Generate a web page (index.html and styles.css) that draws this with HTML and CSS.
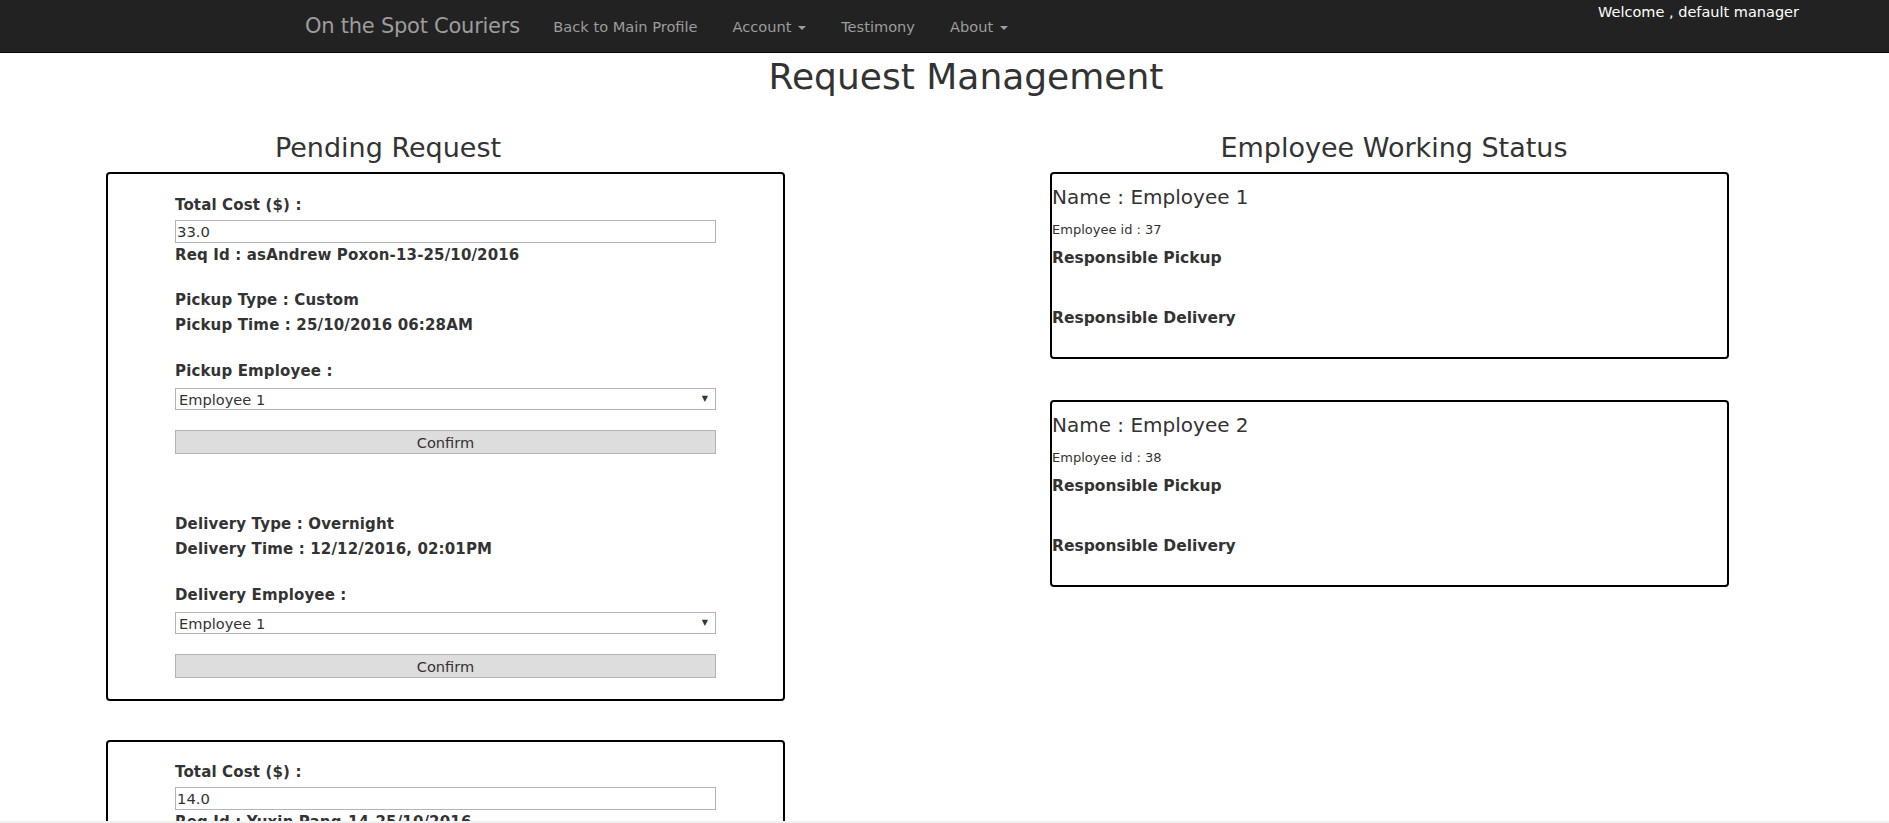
FILE: index.html
```html
<!DOCTYPE html>
<html>
<head>
<meta charset="utf-8">
<title>Request Management</title>
<link rel="stylesheet" href="styles.css">
</head>
<body>
<nav class="navbar">
  <div class="nav-inner">
    <a class="brand">On the Spot Couriers</a>
    <ul class="nav-links">
      <li><a>Back to Main Profile</a></li>
      <li><a>Account <span class="caret"></span></a></li>
      <li><a>Testimony</a></li>
      <li><a>About <span class="caret"></span></a></li>
    </ul>
    <div class="welcome">Welcome , default manager</div>
  </div>
</nav>

<h1 class="page-title">Request Management</h1>

<main class="columns">
  <section class="col col-left">
    <h2 class="col-title">Pending Request</h2>

    <div class="card req-card">
      <p class="label">Total Cost ($) :</p>
      <input class="field" type="text" value="33.0">
      <p class="label">Req Id : asAndrew Poxon-13-25/10/2016</p>

      <p class="label gap-20">Pickup Type : Custom</p>
      <p class="label">Pickup Time : 25/10/2016 06:28AM</p>
      <p class="label gap-21">Pickup Employee :</p>
      <div class="select-wrap"><select class="select"><option>Employee 1</option><option>Employee 2</option></select><span class="arrow">&#9660;</span></div>
      <button class="btn">Confirm</button>

      <p class="label gap-58">Delivery Type : Overnight</p>
      <p class="label">Delivery Time : 12/12/2016, 02:01PM</p>
      <p class="label gap-21">Delivery Employee :</p>
      <div class="select-wrap"><select class="select"><option>Employee 1</option><option>Employee 2</option></select><span class="arrow">&#9660;</span></div>
      <button class="btn">Confirm</button>
    </div>

    <div class="card req-card second">
      <p class="label">Total Cost ($) :</p>
      <input class="field" type="text" value="14.0">
      <p class="label">Req Id : Yuxin Pang-14-25/10/2016</p>

      <p class="label gap-20">Pickup Type : Custom</p>
      <p class="label">Pickup Time : 25/10/2016 07:10AM</p>
      <p class="label gap-21">Pickup Employee :</p>
      <div class="select-wrap"><select class="select"><option>Employee 1</option><option>Employee 2</option></select><span class="arrow">&#9660;</span></div>
      <button class="btn">Confirm</button>
    </div>
  </section>

  <section class="col col-right">
    <h2 class="col-title">Employee Working Status</h2>

    <div class="card emp-card">
      <h4 class="emp-name">Name : Employee 1</h4>
      <p class="emp-id">Employee id : 37</p>
      <p class="emp-resp">Responsible Pickup</p>
      <p class="emp-resp resp-delivery">Responsible Delivery</p>
    </div>

    <div class="card emp-card">
      <h4 class="emp-name">Name : Employee 2</h4>
      <p class="emp-id">Employee id : 38</p>
      <p class="emp-resp">Responsible Pickup</p>
      <p class="emp-resp resp-delivery">Responsible Delivery</p>
    </div>
  </section>
</main>

<div class="bottom-strip"></div>
</body>
</html>
```

FILE: styles.css
```css
* { box-sizing: border-box; }

html, body {
  margin: 0;
  padding: 0;
  background: #ffffff;
  color: #333333;
  font-family: "DejaVu Sans", Verdana, sans-serif;
  font-size: 14px;
}

/* ---------- navbar ---------- */
.navbar {
  height: 53px;
  background: #222222;
  border-bottom: 1px solid #080808;
}

.nav-inner {
  display: flex;
  align-items: flex-start;
  height: 52px;
  padding-left: 305px;
}

.brand {
  font-size: 21px;
  line-height: 53px;
  color: #9d9d9d;
  letter-spacing: -0.25px;
}

.nav-links {
  display: flex;
  list-style: none;
  margin: 0 0 0 16px;
  padding: 0;
}

.nav-links a {
  display: block;
  padding: 0 17.5px;
  font-size: 14.6px;
  line-height: 53px;
  color: #9d9d9d;
}

.caret {
  display: inline-block;
  width: 0;
  height: 0;
  margin-left: 2px;
  vertical-align: middle;
  border-top: 4px solid #9d9d9d;
  border-left: 4px solid transparent;
  border-right: 4px solid transparent;
}

.welcome {
  margin-left: auto;
  margin-right: 90px;
  padding-top: 3px;
  font-size: 14.5px;
  line-height: 18px;
  color: #ffffff;
}

/* ---------- title ---------- */
.page-title {
  margin: 4px 0 0 0;
  padding-left: 43px;
  text-align: center;
  font-size: 36px;
  font-weight: normal;
  line-height: 40px;
  color: #333333;
}

/* ---------- columns ---------- */
.columns {
  display: flex;
  align-items: flex-start;
  padding-left: 106px;
  gap: 265px;
}

.col {
  width: 679px;
  flex: none;
}

.col-title {
  margin: 35px 0 8px 0;
  font-size: 27px;
  font-weight: normal;
  line-height: 32px;
  text-align: center;
  color: #333333;
}

.col-left .col-title { padding-right: 115px; }
.col-right .col-title { padding-left: 9px; }

.card {
  border: 2px solid #000000;
  border-radius: 4px;
  background: #ffffff;
}

/* ---------- request card ---------- */
.req-card {
  padding: 19px 67px 21px 67px;
}

.req-card.second {
  margin-top: 39px;
  padding-top: 18px;
}

.label {
  margin: 0;
  font-size: 15px;
  font-weight: bold;
  line-height: 25px;
  letter-spacing: 0.15px;
  color: #333333;
  white-space: nowrap;
}

.gap-20 { margin-top: 20px; }
.gap-21 { margin-top: 21px; }
.gap-58 { margin-top: 58px; }

.field {
  display: block;
  width: 100%;
  height: 23px;
  margin: 2px 0 0 0;
  padding: 0 1px;
  border: 1px solid #b4b4b4;
  background: #ffffff;
  font-family: "DejaVu Sans", Verdana, sans-serif;
  font-size: 14.8px;
  color: #333333;
  outline: none;
}

.select-wrap {
  position: relative;
  margin-top: 4px;
  height: 22px;
}

.select {
  display: block;
  width: 100%;
  height: 22px;
  padding: 0 3px;
  border: 1px solid #b4b4b4;
  border-radius: 0;
  background: #ffffff;
  -webkit-appearance: none;
  appearance: none;
  font-family: "DejaVu Sans", Verdana, sans-serif;
  font-size: 14.6px;
  color: #333333;
}

.arrow {
  position: absolute;
  right: 8px;
  top: 6px;
  font-size: 8px;
  line-height: 10px;
  color: #333333;
  pointer-events: none;
}

.btn {
  display: block;
  width: 100%;
  height: 24px;
  margin-top: 20px;
  padding: 0;
  border: 1px solid #b4b4b4;
  background: #dddddd;
  font-family: "DejaVu Sans", Verdana, sans-serif;
  font-size: 14.6px;
  color: #333333;
}

/* ---------- employee cards ---------- */
.emp-card {
  padding: 10px 0 28px 0;
  margin-bottom: 41px;
}

.emp-name {
  margin: 0;
  font-size: 20px;
  font-weight: normal;
  line-height: 26px;
  color: #333333;
}

.emp-id {
  margin: 10px 0 0 0;
  font-size: 13px;
  line-height: 20px;
  color: #333333;
}

.emp-resp {
  margin: 7px 0 0 0;
  font-size: 15.5px;
  font-weight: bold;
  line-height: 22px;
  color: #333333;
}

.emp-resp.resp-delivery { margin-top: 38px; }

.bottom-strip {
  position: fixed;
  left: 0;
  right: 0;
  bottom: 0;
  height: 2px;
  background: #f0f0f0;
}
```
